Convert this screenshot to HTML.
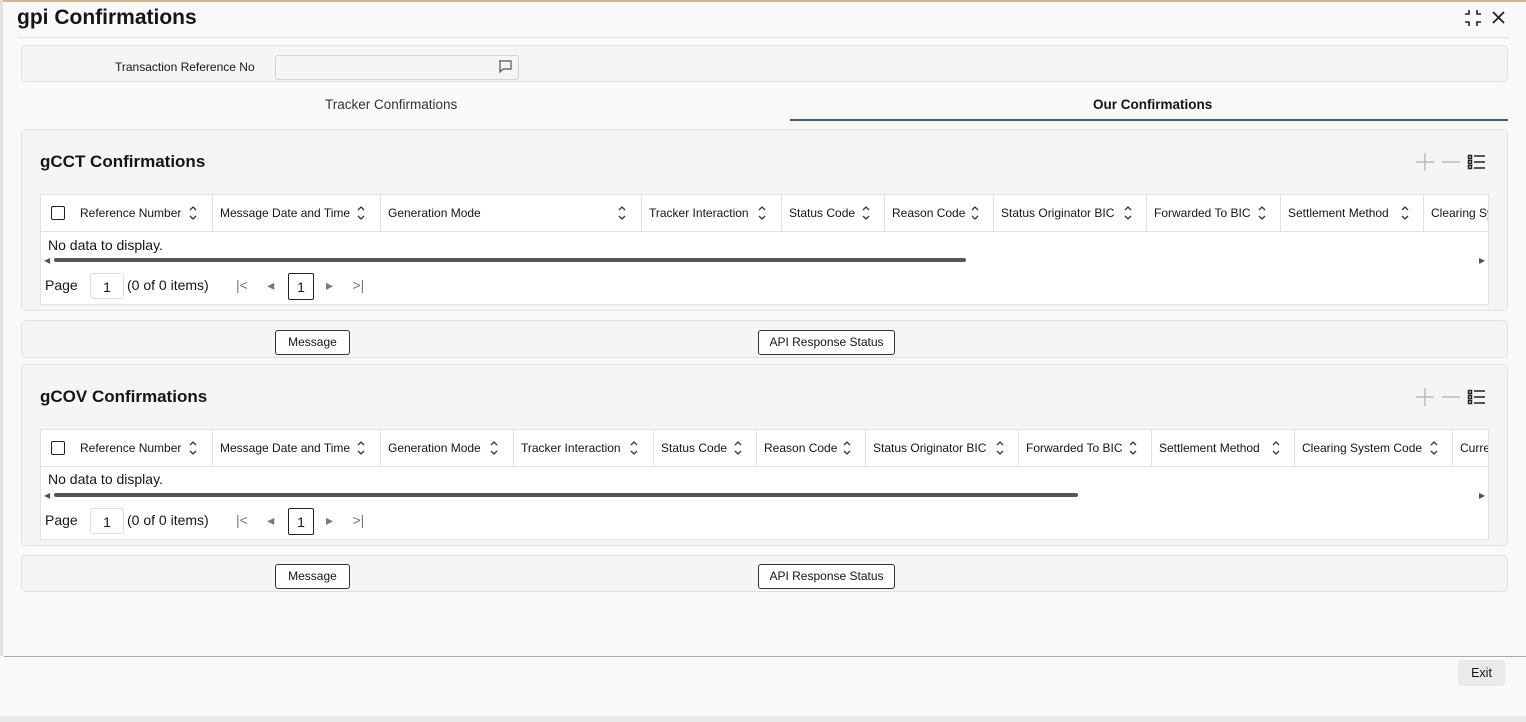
<!DOCTYPE html>
<html><head><style>
*{box-sizing:border-box;margin:0;padding:0}
body{width:1526px;height:722px;background:#f9f9f8;font-family:"Liberation Sans",Arial,sans-serif;color:#161513;position:relative;overflow:hidden;font-size:13px}
.a{position:absolute}
.panel{position:absolute;left:21px;width:1487px;background:#f6f5f3;border:1px solid #e4e1dd;border-radius:5px}
.tbl{position:absolute;left:40px;width:1449px;background:#fff;border:1px solid #e4e1dd;overflow:hidden}
.hd{position:absolute;left:0;top:0;height:37px;width:100%;border-bottom:1px solid #e4e1dd;white-space:nowrap}
.hd div{position:absolute;top:0;height:37px;line-height:36px;padding-left:7px;border-right:1px solid #e4e1dd;font-size:12px}
.hd div::after{content:"";position:absolute;right:14px;top:13px;width:5px;height:10px;background:
 linear-gradient(#fff,#fff);}
.cb{position:absolute;left:10px;top:11px;width:14px;height:14px;border:1.5px solid #222;border-radius:2px}
.btn{position:absolute;height:25px;border:1px solid #333;border-radius:3px;background:#fff;font-size:12px;text-align:center;line-height:23px}
.sb{position:absolute;height:4px;background:#555;border-radius:2px;left:13px}
.pg{position:absolute;font-size:14px}
.s{position:absolute;top:13px}
</style></head><body>
<div class="a" style="left:0;top:0;width:1526px;height:2px;background:#c9b89a"></div>
<div class="a" style="left:17px;top:6px;font-size:21px;font-weight:bold">gpi Confirmations</div>
<svg class="a" style="left:1463px;top:8px" width="50" height="20" viewBox="0 0 50 20" fill="none" stroke="#222" stroke-width="1.6">
<path d="M2 6h4V2M14 2v4h4M2 14h4v4M14 18v-4h4"/><path d="M30 4l11 11M41 4L30 15" stroke-width="1.8"/></svg>
<div class="a" style="left:17px;top:37px;width:1492px;height:1px;background:#e6e3df"></div>
<div class="panel" style="top:45px;height:37px"></div>
<div class="a" style="left:115px;top:60px;font-size:12px">Transaction Reference No</div>
<div class="a" style="left:275px;top:55px;width:244px;height:25px;border:1px solid #d6d2cd;border-radius:3px;background:#f6f5f3"></div>
<svg class="a" style="left:498px;top:60px" width="14" height="14" viewBox="0 0 14 14" fill="none" stroke="#555" stroke-width="1.2"><path d="M1 1h12v8H5l-3 3V1z"/></svg>
<div class="a" style="left:325px;top:97px;font-size:13.5px;color:#333">Tracker Confirmations</div>
<div class="a" style="left:1093px;top:97px;font-size:13.5px;font-weight:bold">Our Confirmations</div>
<div class="a" style="left:790px;top:119px;width:718px;height:2px;background:#4d5a73"></div>

<!-- gCCT -->
<div class="panel" style="top:129px;height:182px"></div>
<div class="a" style="left:40px;top:152px;font-size:17px;font-weight:bold">gCCT Confirmations</div>
<svg class="a" style="left:1414px;top:151px" width="74" height="22" viewBox="0 0 74 22" fill="none"><path d="M11 2v18M2 11h18" stroke="#bbb" stroke-width="1.5"/><path d="M28 11h18" stroke="#bbb" stroke-width="1.5"/><g stroke="#222" stroke-width="1.5"><rect x="54.5" y="4.5" width="3" height="3"/><rect x="54.5" y="9.5" width="3" height="3"/><rect x="54.5" y="14.5" width="3" height="3"/><path d="M60 5h11M60 11h11M60 17h11"/></g></svg>
<div class="tbl" style="top:194px;height:111px">
<div class="hd"><i class="cb"></i>
<div style="left:32px;width:140px">Reference Number</div>
<div style="left:172px;width:168px">Message Date and Time</div>
<div style="left:340px;width:261px">Generation Mode</div>
<div style="left:601px;width:140px">Tracker Interaction</div>
<div style="left:741px;width:103px">Status Code</div>
<div style="left:844px;width:109px">Reason Code</div>
<div style="left:953px;width:153px">Status Originator BIC</div>
<div style="left:1106px;width:134px">Forwarded To BIC</div>
<div style="left:1240px;width:143px">Settlement Method</div>
<div style="left:1383px;width:100px">Clearing Sy</div>
</div>
<svg class="a" style="left:0;top:0" width="1449" height="37">
<g fill="none" stroke="#333" stroke-width="1.3">
<path id="ic" d="M149 15l3-3 3 3M149 21l3 3 3-3"/>
<use href="#ic" x="168"/><use href="#ic" x="429"/><use href="#ic" x="569"/><use href="#ic" x="673"/><use href="#ic" x="782"/><use href="#ic" x="935"/><use href="#ic" x="1069"/><use href="#ic" x="1212"/>
</g></svg>
<div class="a" style="left:7px;top:42px;font-size:14px">No data to display.</div>
<div class="sb" style="top:63px;width:912px"></div>
<div class="a" style="left:3px;top:61px;font-size:8px;color:#555">◀</div><div class="a" style="left:1438px;top:61px;font-size:8px;color:#555">▶</div>
<div class="pg" style="left:4px;top:82px">Page</div>
<div class="a" style="left:49px;top:78px;width:34px;height:26px;border:1px solid #ddd;border-radius:3px;text-align:center;line-height:26px;font-size:14px">1</div>
<div class="pg" style="left:86px;top:82px">(0 of 0 items)</div>
<div class="pg" style="left:195px;top:82px;color:#777">|&lt;&nbsp;&nbsp;&nbsp;&nbsp;&nbsp;◂</div>
<div class="a" style="left:247px;top:78px;width:26px;height:27px;border:1.5px solid #222;border-radius:2px;text-align:center;line-height:26px;font-size:14px">1</div>
<div class="pg" style="left:285px;top:82px;color:#777">▸&nbsp;&nbsp;&nbsp;&nbsp;&nbsp;&gt;|</div>
</div>
<div class="panel" style="top:320px;height:38px"></div>
<div class="btn" style="left:275px;top:330px;width:75px">Message</div>
<div class="btn" style="left:758px;top:330px;width:137px">API Response Status</div>

<!-- gCOV -->
<div class="panel" style="top:364px;height:182px"></div>
<div class="a" style="left:40px;top:387px;font-size:17px;font-weight:bold">gCOV Confirmations</div>
<svg class="a" style="left:1414px;top:386px" width="74" height="22" viewBox="0 0 74 22" fill="none"><path d="M11 2v18M2 11h18" stroke="#bbb" stroke-width="1.5"/><path d="M28 11h18" stroke="#bbb" stroke-width="1.5"/><g stroke="#222" stroke-width="1.5"><rect x="54.5" y="4.5" width="3" height="3"/><rect x="54.5" y="9.5" width="3" height="3"/><rect x="54.5" y="14.5" width="3" height="3"/><path d="M60 5h11M60 11h11M60 17h11"/></g></svg>
<div class="tbl" style="top:429px;height:111px">
<div class="hd"><i class="cb"></i>
<div style="left:32px;width:140px">Reference Number</div>
<div style="left:172px;width:168px">Message Date and Time</div>
<div style="left:340px;width:133px">Generation Mode</div>
<div style="left:473px;width:140px">Tracker Interaction</div>
<div style="left:613px;width:103px">Status Code</div>
<div style="left:716px;width:109px">Reason Code</div>
<div style="left:825px;width:153px">Status Originator BIC</div>
<div style="left:978px;width:133px">Forwarded To BIC</div>
<div style="left:1111px;width:143px">Settlement Method</div>
<div style="left:1254px;width:158px">Clearing System Code</div>
<div style="left:1412px;width:80px">Curre</div>
</div>
<svg class="a" style="left:0;top:0" width="1449" height="37">
<g fill="none" stroke="#333" stroke-width="1.3">
<path id="ic2" d="M149 15l3-3 3 3M149 21l3 3 3-3"/>
<use href="#ic2" x="168"/><use href="#ic2" x="301"/><use href="#ic2" x="441"/><use href="#ic2" x="545"/><use href="#ic2" x="654"/><use href="#ic2" x="807"/><use href="#ic2" x="940"/><use href="#ic2" x="1083"/><use href="#ic2" x="1241"/>
</g></svg>
<div class="a" style="left:7px;top:41px;font-size:14px">No data to display.</div>
<div class="sb" style="top:63px;width:1024px"></div>
<div class="a" style="left:3px;top:61px;font-size:8px;color:#555">◀</div><div class="a" style="left:1438px;top:61px;font-size:8px;color:#555">▶</div>
<div class="pg" style="left:4px;top:82px">Page</div>
<div class="a" style="left:49px;top:78px;width:34px;height:26px;border:1px solid #ddd;border-radius:3px;text-align:center;line-height:26px;font-size:14px">1</div>
<div class="pg" style="left:86px;top:82px">(0 of 0 items)</div>
<div class="pg" style="left:195px;top:82px;color:#777">|&lt;&nbsp;&nbsp;&nbsp;&nbsp;&nbsp;◂</div>
<div class="a" style="left:247px;top:78px;width:26px;height:27px;border:1.5px solid #222;border-radius:2px;text-align:center;line-height:26px;font-size:14px">1</div>
<div class="pg" style="left:285px;top:82px;color:#777">▸&nbsp;&nbsp;&nbsp;&nbsp;&nbsp;&gt;|</div>
</div>
<div class="panel" style="top:555px;height:37px"></div>
<div class="btn" style="left:275px;top:564px;width:75px">Message</div>
<div class="btn" style="left:758px;top:564px;width:137px">API Response Status</div>

<div class="a" style="left:4px;top:656px;width:1522px;height:1px;background:#aaa"></div>
<div class="a" style="left:1458px;top:660px;width:47px;height:26px;background:#ebeae8;border-radius:3px;text-align:center;line-height:26px;font-size:12.5px">Exit</div>
<div class="a" style="left:0;top:716px;width:1526px;height:6px;background:#e8e8e8"></div>
<div class="a" style="left:0;top:0;width:3px;height:656px;background:#e2e2e2"></div>
<style>.hd div::after{display:none}</style>
</body></html>
